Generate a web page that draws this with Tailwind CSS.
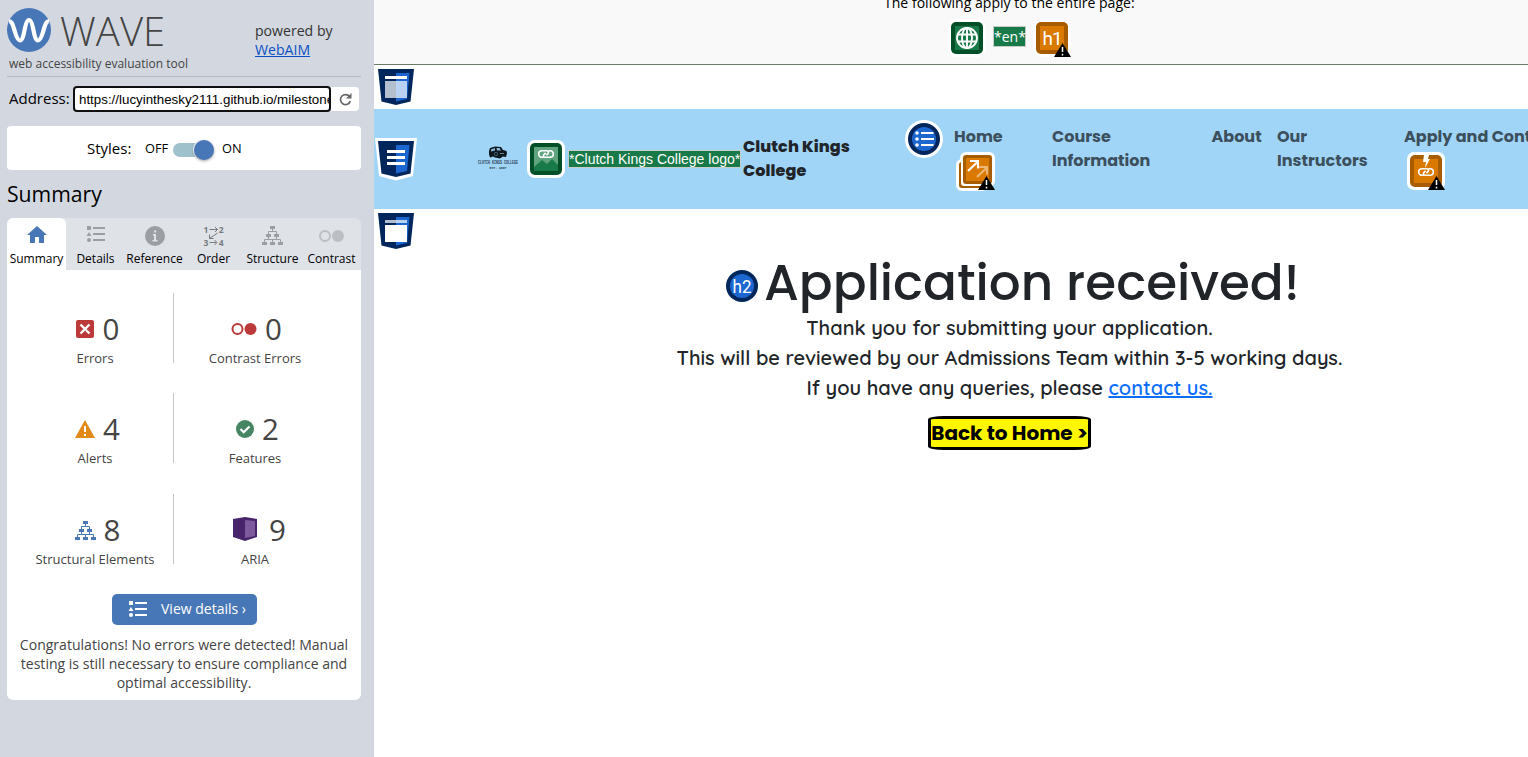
<!DOCTYPE html>
<html lang="en">
<head>
<meta charset="utf-8">
<title>WAVE Web Accessibility Evaluation Tool</title>
<script src="https://cdn.jsdelivr.net/npm/@tailwindcss/browser@4"></script>
</head>
<body class="w-[1528px] h-[757px] overflow-hidden flex bg-white font-['Open_Sans',sans-serif] text-black">

<svg class="hidden">
  <defs>
    <symbol id="list" viewBox="0 0 20 17"><path d="M1 0h4v4H1zM7 1h12v2H7zM3 6l2.500 4h-5zM7 7h12v2H7zM7 13h12v2H7z"/><circle cx="3" cy="14" r="2"/></symbol>
    <symbol id="tree" viewBox="0 0 21 19"><path d="M8 0h5v3H8zM4 8h5v3H4zM12 8h5v3h-5zM0 16h5v3H0zM8 16h5v3H8zM16 16h5v3h-5z"/><path d="M10.500 3v2.500M6.500 8V5.500h8V8M6.500 11v2.500M14.500 11v2.500M2.500 16v-2.500h16V16M10.500 13.500V16" fill="none" stroke="currentColor"/></symbol>
    <symbol id="warn" viewBox="0 0 17 14"><path d="M8.500 0L17 14H0z" fill="#000"/><path d="M8.500 4v5M8.500 10.800v1.700" stroke="#fff" stroke-width="1.500"/></symbol>
    <symbol id="shield" viewBox="0 0 36 36"><path d="M0 0h36l-3.500 32.500L18 36 3.500 32.500z" fill="#00265c"/><path d="M18 4h13.500l-2.500 26L18 32.500z" fill="#1c66cf"/></symbol>
    <symbol id="link" viewBox="0 0 18 10"><path d="M6.500 8.300H5A3.300 3.300 0 0 1 5 1.700h4.500c2.300 0 2.500 2 1.300 3.100L9.300 6.200M11.500 1.700H13a3.300 3.300 0 0 1 0 6.600H8.500c-2.300 0-2.500-2-1.300-3.100L8.700 3.800" fill="none" stroke="#fff" stroke-width="1.600"/></symbol>
  </defs>
</svg>

<aside class="w-[374px] h-full shrink-0 bg-[#d3d8e0] pl-[7px] pr-[13px]">
  <header class="h-[77px] border-b border-[#b4b9bb] flex">
    <div class="w-[248px]">
      <div class="flex h-[52px] pt-2">
        <svg class="w-11 h-11" viewBox="0 0 44 44"><circle cx="22" cy="22" r="22" fill="#4877b7"/><path d="M2 13.500C5.500 13 6 18 8 24c1.500 5 3 8.500 5 8.500 3 0 4-8 5-12.500 1-5 2-8 4-8s3 3 4 8c1 4.500 2 12.500 5 12.500 2 0 3.500-3.500 5-8.500 2-6 2.500-11 6-10.500" fill="none" stroke="#fff" stroke-width="4.200"/></svg>
        <span class="ml-[9px] text-[40px] leading-[46px] font-light text-[#444] tracking-[0.100px]">WAVE</span>
      </div>
      <p class="ml-[2px] mt-[3px] text-[12px] leading-[17px] text-[#444] whitespace-nowrap">web accessibility evaluation tool</p>
    </div>
    <div class="pt-[21px] text-[14.100px] leading-[19px] text-[#333]">powered by<br><a class="text-[#0b50c4] underline">WebAIM</a></div>
  </header>

  <div class="flex mt-[9px] h-[26px] items-center">
    <label class="w-[66px] h-[26px] leading-[25px] pl-[2px] text-[15px] whitespace-nowrap">Address:</label>
    <div class="w-[258px] h-[26px] rounded-[4px] border-2 border-[#101010] bg-white pl-[4px] overflow-hidden whitespace-nowrap font-['Liberation_Sans'] text-[13.333px] leading-[23px]">https://lucyinthesky2111.github.io/milestone</div>
    <div class="w-[28px] h-6 bg-white rounded-r-[4px] flex items-center justify-center">
      <svg class="w-[13px] h-[13px]" viewBox="0 0 13 13"><path d="M10.500 3.500A5 5 0 1 0 11.300 8" fill="none" stroke="#666" stroke-width="1.700"/><path d="M12.500 0v5.500H7z" fill="#666"/></svg>
    </div>
  </div>

  <section class="mt-[14px] h-11 rounded-[4px] bg-white flex items-center pl-[80px]">
    <span class="w-[58px] text-[15px]">Styles:</span>
    <span class="w-[28px] text-[12.800px] mt-px">OFF</span>
    <div class="w-[41px] h-[14px] rounded-full bg-[#9fc1cb] flex items-center justify-end mt-[3px]"><div class="w-5 h-5 shrink-0 rounded-full bg-[#4877b7] shadow-[0_1px_3px_#0006,0_0_0_1px_#fff]"></div></div>
    <span class="ml-[8px] text-[12.800px] mt-px">ON</span>
  </section>

  <h1 class="mt-[9px] h-[39px] leading-[29px] text-[21.200px]">Summary</h1>

  <nav class="h-[52px] grid grid-cols-6 rounded-t-[6px] bg-[#dfe2e7] text-[12px] leading-4 text-center text-[#9b9fa3]">
    <div class="bg-white rounded-t-[6px] pt-[7px] flex flex-col items-center"><svg class="w-5 h-[19px] mb-[7px]" viewBox="0 0 20 19"><path d="M10 1l10 9h-3v8h-5v-6H8v6H3v-8H0z" fill="#4877b7"/></svg><span class="text-black">Summary</span></div>
    <div class="pt-[8px] flex flex-col items-center"><svg class="w-5 h-[17px] mb-[8px]" fill="currentColor"><use href="#list"/></svg><span class="text-black">Details</span></div>
    <div class="pt-[8px] flex flex-col items-center"><svg class="w-5 h-5 mb-[5px]" viewBox="0 0 20 20"><circle cx="10" cy="10" r="10" fill="currentColor"/><path d="M8 8h3v6h1.500v1.500h-5V14H9V9.500H8zM9 4.500h2.200v2H9z" fill="#dfe2e7"/></svg><span class="text-black">Reference</span></div>
    <div class="pt-[7px] flex flex-col items-center"><div class="relative h-[26px] w-5 text-[8.500px] leading-[9px] font-bold text-[#777b7e]"><div class="flex justify-between h-[13px]"><span>1</span><span>2</span></div><div class="flex justify-between"><span>3</span><span>4</span></div><svg class="absolute left-0 top-0 w-5 h-[22px]" viewBox="0 0 20 22"><path d="M5.500 4.500h8M11 2l2.500 2.500L11 7M13.500 8l-8 5.500M5.500 9.500v4h4M5.500 17.500h7M10.500 15l2.500 2.500-2.500 2.500" fill="none" stroke="currentColor"/></svg></div><span class="text-black">Order</span></div>
    <div class="pt-[8px] flex flex-col items-center"><svg class="w-[21px] h-[19px] mb-[6px]" fill="currentColor"><use href="#tree"/></svg><span class="text-black">Structure</span></div>
    <div class="pt-[12px] flex flex-col items-center"><svg class="w-[25px] h-[12px] mb-[9px]" viewBox="0 0 25 12"><circle cx="6" cy="6" r="5" fill="none" stroke="#bbbfc4" stroke-width="2"/><circle cx="19" cy="6" r="6" fill="#bbbfc4"/></svg><span class="text-black">Contrast</span></div>
  </nav>

  <section class="h-[430px] bg-white rounded-b-[6px] pt-[23px] text-[#444]">
    <div class="grid grid-cols-[167px_187px] text-[13px] leading-[18px] text-center">
      <div class="h-[70px] mb-[30px] border-r border-[#c4c4c4] pl-[10px] flex flex-col items-center"><div class="flex items-center gap-[9px] h-9 shrink-0 mt-[18px] ml-[5px] text-[29.500px]"><svg class="w-[18px] h-[18px]" viewBox="0 0 18 18"><rect width="18" height="18" rx="2" fill="#bb3939"/><path d="M4.500 4.500l9 9m0-9l-9 9" stroke="#fff" stroke-width="2.400"/></svg>0</div><span class="mt-[2px]">Errors</span></div>
      <div class="h-[70px] pr-[25px] flex flex-col items-center"><div class="flex items-center gap-2 h-9 shrink-0 mt-[18px] ml-[3px] text-[29.500px]"><svg class="w-[26px] h-[12px]" viewBox="0 0 26 12"><circle cx="6.500" cy="6" r="5" fill="none" stroke="#bb3939" stroke-width="2"/><circle cx="19.500" cy="6" r="6" fill="#bb3939"/></svg>0</div><span class="mt-[2px]">Contrast Errors</span></div>
      <div class="h-[70px] mb-[31px] border-r border-[#c4c4c4] pl-[10px] flex flex-col items-center"><div class="flex items-center gap-2 h-9 shrink-0 mt-[18px] ml-[5px] text-[29.500px]"><svg class="w-5 h-[18px]" viewBox="0 0 20 18"><path d="M10 0l10 18H0z" fill="#e18a18"/><path d="M10 6v6M10 14v2" stroke="#fff" stroke-width="2"/></svg>4</div><span class="mt-[2px]">Alerts</span></div>
      <div class="h-[70px] pr-[25px] flex flex-col items-center"><div class="flex items-center gap-2 h-9 shrink-0 mt-[18px] ml-[5px] text-[29.500px]"><svg class="w-[18px] h-[18px]" viewBox="0 0 18 18"><circle cx="9" cy="9" r="9" fill="#458564"/><path d="M4.500 9l3.200 3.200 5.800-5.700" fill="none" stroke="#fff" stroke-width="2.200"/></svg>2</div><span class="mt-[2px]">Features</span></div>
      <div class="h-[70px] border-r border-[#c4c4c4] pl-[10px] flex flex-col items-center"><div class="flex items-center gap-2 h-9 shrink-0 mt-[18px] ml-[5px] text-[29.500px]"><svg class="w-[21px] h-[19px] text-[#4877b7]" fill="currentColor"><use href="#tree"/></svg>8</div><span class="mt-[2px]">Structural Elements</span></div>
      <div class="h-[70px] pr-[25px] flex flex-col items-center"><div class="flex items-center gap-[12px] h-9 shrink-0 mt-[18px] ml-[9px] text-[29.500px]"><svg class="w-6 h-6 -mt-[2px]" viewBox="0 0 24 24"><path d="M0 2l12-2 12 2v18l-12 4-12-4z" fill="#47246b"/><path d="M12 3l10 1v15l-10 2z" fill="#7d5a9c"/></svg>9</div><span class="mt-[2px]">ARIA</span></div>
    </div>
    <button class="mt-[30px] ml-[105px] w-[145px] h-[31px] rounded-[5px] bg-[#4877b7] text-white text-[14px] flex items-center pl-4 whitespace-nowrap"><svg class="w-5 h-[17px] mr-[13px]" fill="currentColor"><use href="#list"/></svg><span class="-mt-[2px]">View details ›</span></button>
    <p class="mt-[10px] text-center text-[14.050px] leading-[19px] whitespace-nowrap">Congratulations! No errors were detected! Manual<br>testing is still necessary to ensure compliance and<br>optimal accessibility.</p>
  </section>
</aside>

<main class="w-[1154px] h-full overflow-hidden">
  <header class="h-[65px] bg-[#f9f9f9] border-b border-[#6c7a6c] flex flex-col items-center pl-[117px] overflow-hidden">
    <div class="w-full -mt-[8px] h-[27px] text-[14.070px] leading-[22px]"><p class="w-[252px] ml-[393px] whitespace-nowrap">The following apply to the entire page:</p></div>
    <div class="w-full flex pl-[457px] items-start">
      <div class="w-[38px] h-[38px] rounded-[8px] bg-white p-[3px]"><div class="w-8 h-8 rounded-[5px] bg-[#004f27] p-1"><div class="bg-[#187a48] w-6 h-6"><svg class="w-6 h-6" viewBox="0 0 24 24" fill="none" stroke="#fff" stroke-width="1.900"><circle cx="12" cy="12" r="10"/><ellipse cx="12" cy="12" rx="5" ry="10"/><path d="M12 2v20M3 8.500h18M3 15.500h18"/></svg></div></div></div>
      <span class="ml-[7px] mt-[7px] w-[33px] h-[21px] border border-[#c8ccc8] bg-[#187a48] text-white text-[14px] leading-[19px] text-center">*en*</span>
      <div class="relative ml-[7px] w-[38px] h-[38px] rounded-[8px] bg-white p-[3px]"><div class="w-8 h-8 rounded-[5px] bg-[#a85c00] p-1"><div class="bg-[#d97900] w-6 h-6 text-white font-['Roboto'] text-[19px] tracking-[-1px] leading-[25px] text-center">h1</div></div><svg class="absolute w-[17px] h-[14px] left-[21px] top-[24px]"><use href="#warn"/></svg></div>
    </div>
  </header>

  <div class="h-11 pl-1 pt-1"><svg class="w-9 h-9" viewBox="0 0 36 36"><use href="#shield"/><path d="M7 7h22v3H7z" fill="#fff"/><path d="M7 12h22v17H7z" fill="#fff" fill-opacity=".7"/></svg></div>

  <nav class="h-[100px] w-[1250px] bg-[#a0d5f8] flex items-start font-['Poppins','Inter',sans-serif] font-bold text-[16px] leading-6 text-[#3c4f5c] whitespace-nowrap">
    <svg class="ml-[1px] mt-[28px] w-[43px] h-[44px]" viewBox="-3 -4 43 44"><path d="M-3-3h42l-4 38-17 4.500-17-4.500z" fill="#fff"/><use href="#shield" width="36" height="36"/><path d="M9 9h18v3H9zM9 15h18v3H9zM9 21h18v3H9z" fill="#fff"/></svg>
    <svg class="ml-[59px] mt-[36px] w-[42px] h-[26px]" viewBox="0 0 42 26"><path d="M12 6l1-3 5-1.500 6 .5 2 3 3.500 1 .5 2-1 4-3-.5-3 2-5-1-2-1-3 1-1-3z" fill="#0e181e"/><path d="M14 4.500l4-1.500v2.500l-4 1zM19.500 3h3l1.500 2.500h-4z" fill="#8cb9d6"/><circle cx="19" cy="9" r="1.700" fill="none" stroke="#54748a" stroke-width=".7"/><path d="M23 8.500h4" stroke="#7ba6c2" stroke-width=".8"/><text x="1" y="19" textLength="40" lengthAdjust="spacingAndGlyphs" font-family="Liberation Mono" font-weight="bold" font-size="5" fill="#2b4557">CLUTCH KINGS COLLEGE</text><text x="12.500" y="24" textLength="17" font-family="Liberation Mono" font-weight="bold" font-size="3.200" fill="#2b4557">EST. 2007</text></svg>
    <div class="ml-[8px] mt-[31px] w-[38px] h-[38px] rounded-[8px] bg-white p-[3px]"><div class="w-8 h-8 rounded-[5px] bg-[#004f27] p-1"><svg class="w-6 h-6" viewBox="0 0 24 24"><path d="M0 0h24v24H0z" fill="#5fa37f"/><path d="M0 20l8-7 5 4 5-5 6 6v6H0z" fill="#187a48"/><use href="#link" x="3" y="2" width="18" height="10"/></svg></div></div>
    <span class="ml-[3px] mt-[41px] w-[173px] h-[18px] border border-[#c8ccc8] bg-[#187a48] text-white font-normal font-['Liberation_Sans'] text-[14px] leading-[16px] text-center">*Clutch Kings College logo*</span>
    <div class="ml-[2px] mt-[26px] w-[162px] text-[#212529] font-extrabold tracking-[0.080px]">Clutch Kings<br>College</div>
    <div class="mt-[11px] w-[38px] h-[38px] rounded-full bg-white p-[3px]"><svg class="w-8 h-8" viewBox="0 0 32 32"><circle cx="16" cy="16" r="16" fill="#00265c"/><circle cx="16" cy="16" r="12" fill="#1c66cf"/><path d="M13 9h12.500v2H13zM13 15h13v2H13zM13 21h12.500v2H13z" fill="#fff"/><circle cx="9" cy="10" r="1.800" fill="#fff"/><circle cx="9" cy="16" r="1.800" fill="#fff"/><circle cx="9" cy="22" r="1.800" fill="#fff"/></svg></div>
    <div class="ml-[11px] mt-[16px] w-[98px]">Home
      <svg class="ml-[2px] mt-[3px] w-[39px] h-[39px]" viewBox="0 0 39 39"><rect y="7" width="32" height="32" rx="6" fill="#fff"/><rect x="4" width="35" height="35" rx="6" fill="#fff"/><rect x="3" y="10" width="27" height="26" rx="3" fill="#a85c00"/><rect x="5" y="8" width="27" height="26" rx="3" fill="#fff"/><rect x="7" y="3" width="29" height="29" rx="3" fill="#a85c00"/><rect x="10" y="6" width="23" height="23" fill="#d97900"/><path d="M12 19L22 9.500M14 9H22V16.500" fill="none" stroke="#fff" stroke-width="2.100"/><path d="M21 25L31 15.500M23 15H31V22.500" fill="none" stroke="#ebb774" stroke-width="2.100"/><use href="#warn" x="22" y="24" width="17" height="14"/></svg>
    </div>
    <div class="mt-[16px] w-[160px]">Course<br>Information</div>
    <div class="mt-[16px] w-[65px] -ml-[0.500px] mr-[0.500px]">About</div>
    <div class="mt-[16px] w-[127px]">Our<br>Instructors</div>
    <div class="mt-[16px]">Apply and Contact
      <svg class="ml-[3px] mt-[3px] w-[38px] h-[38px]" viewBox="0 0 38 38"><rect width="38" height="38" rx="7" fill="#fff"/><rect x="3" y="3" width="32" height="32" rx="5" fill="#a85c00"/><path d="M7 7h24v24H7z" fill="#d97900"/><path d="M17 3h5l-1 4h2l-5 9 1-6h-3z" fill="#fff"/><use href="#link" x="10" y="15" width="18" height="10"/><use href="#warn" x="21" y="24" width="17" height="14"/></svg>
    </div>
  </nav>

  <div class="h-11 pl-1 pt-1"><svg class="w-9 h-9" viewBox="0 0 36 36"><use href="#shield"/><path d="M7 7h22v3H7z" fill="#fff" fill-opacity=".7"/><path d="M7 12h22v17H7z" fill="#fff"/></svg></div>

  <section class="pl-[117px] flex flex-col items-center text-[#212529]">
    <div class="flex h-[60px] w-full pl-[235px] font-['Poppins','Inter',sans-serif]">
      <svg class="w-8 h-8 mt-[17px] shrink-0" viewBox="0 0 32 32"><circle cx="16" cy="16" r="16" fill="#00265c"/><circle cx="16" cy="16" r="12" fill="#1c66cf"/><text x="16" y="23" text-anchor="middle" textLength="19" lengthAdjust="spacingAndGlyphs" font-family="Roboto" font-size="19" fill="#fff">h2</text></svg>
      <h2 class="ml-[6px] text-[50px] leading-[60px] font-medium whitespace-nowrap">Application received!</h2>
    </div>
    <div class="w-[700px] self-start ml-[168.500px] text-center font-['Quicksand','Lato',sans-serif] text-[20px] leading-[30px] font-semibold whitespace-nowrap">
      <p><span>Thank you for submitting your application.</span></p>
      <p><span>This will be reviewed by our Admissions Team within 3-5 working days.</span></p>
      <p>If you have any queries, please <a class="text-[#0d6efd] underline">contact us.</a></p>
    </div>
    <button class="self-start ml-[437px] mt-[13px] w-[163px] h-[34px] rounded-[10%] border-[3px] border-black bg-[#fff600] text-black font-['Poppins','Inter',sans-serif] font-bold text-[20px] leading-[29px] whitespace-nowrap">Back to Home &gt;</button>
  </section>
</main>
</body>
</html>
